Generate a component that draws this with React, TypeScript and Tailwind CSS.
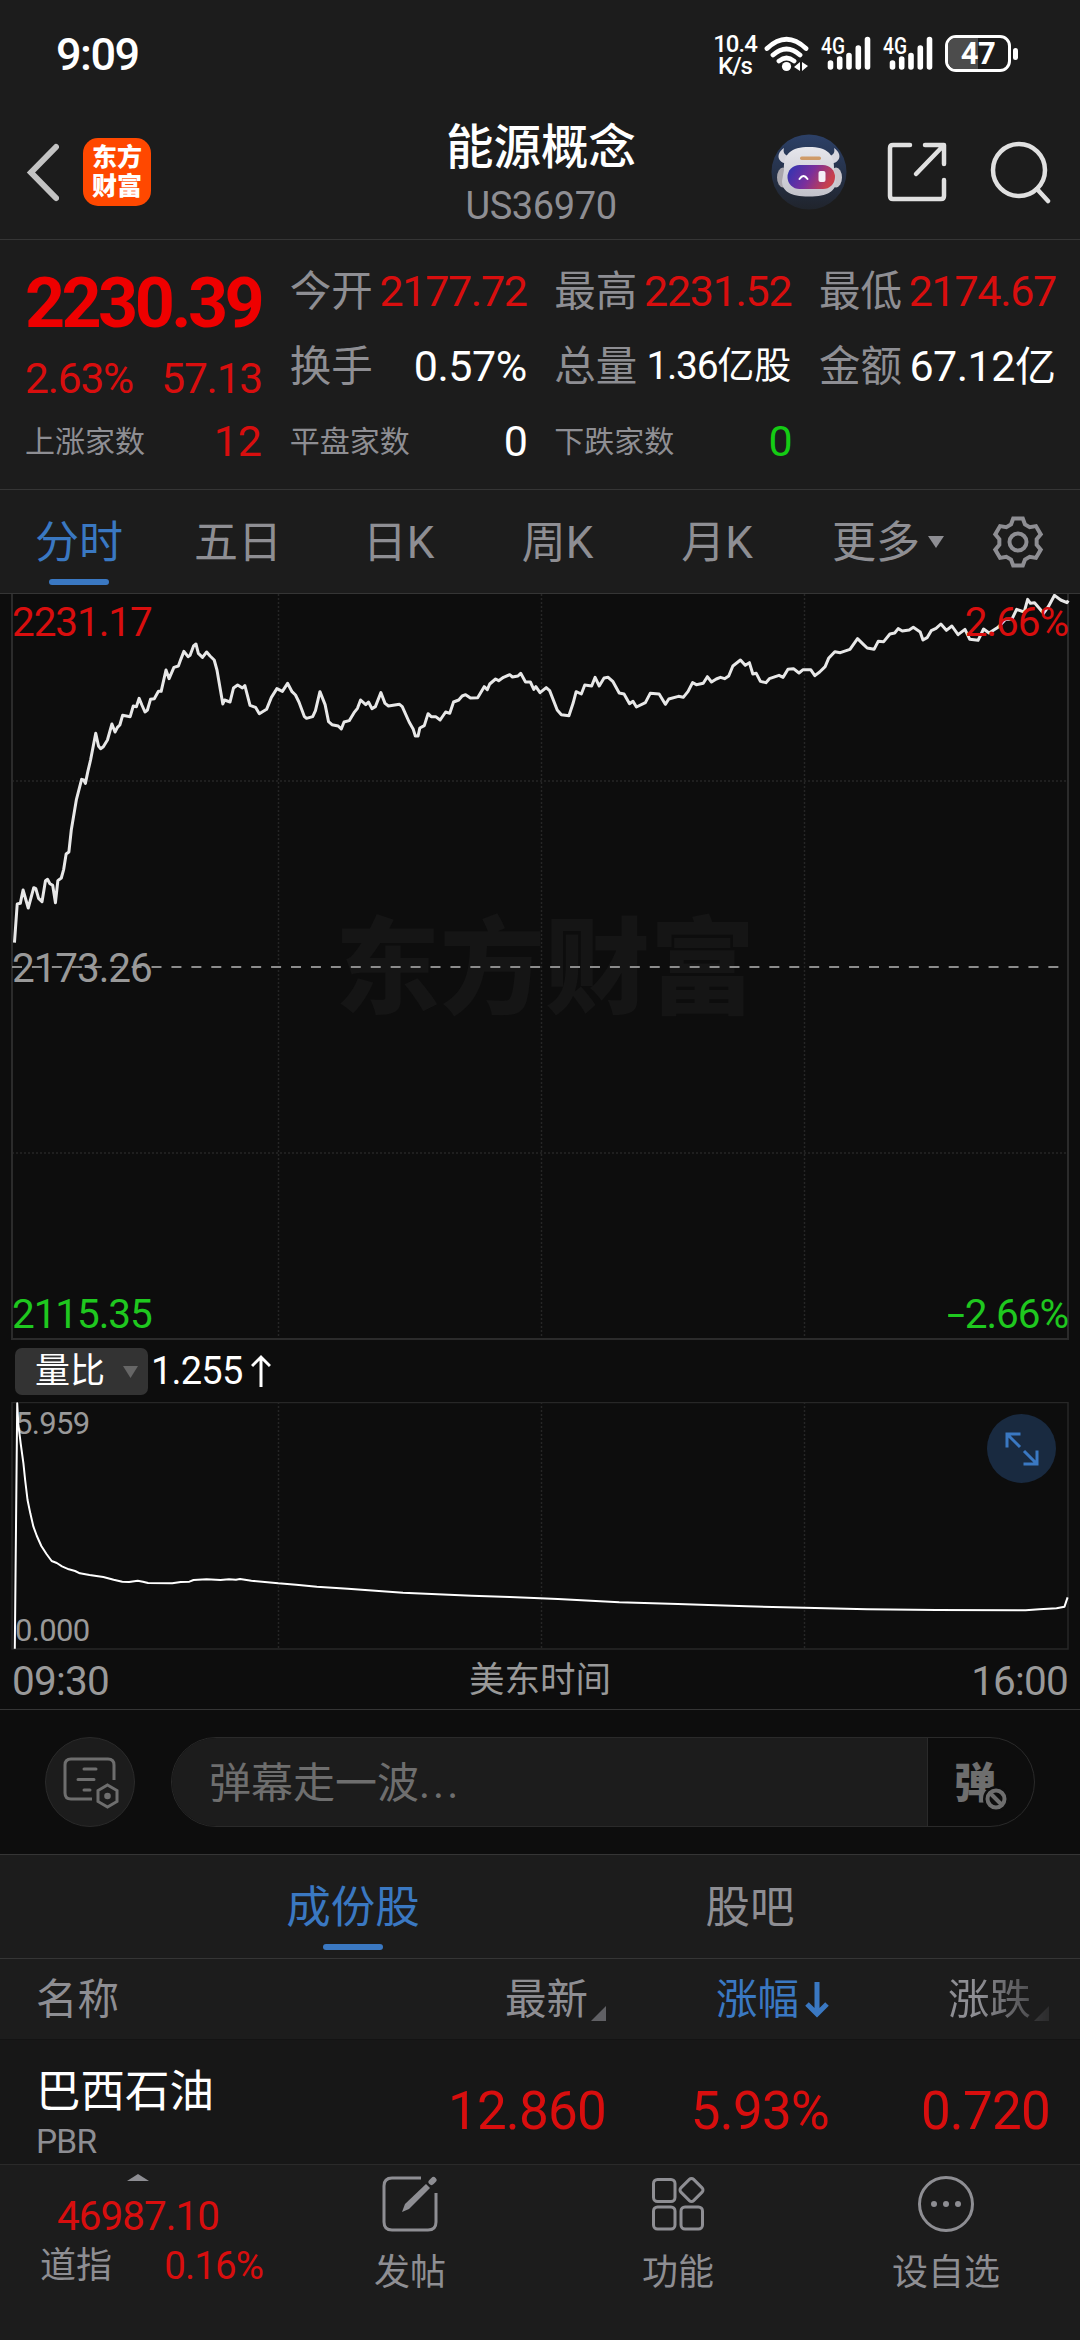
import React from 'react';
import clsx from 'clsx';

const GRID_X = [278.5, 541.5, 804.5];

// Minute line of the index, x/y pairs in plot units (3136 x 2232, origin shifted down by 12)
const pricePoints = [
  '42,1058 50,942 59,940 67,900 82,954 98,893 104,896 112,925 122,935 132,872 138,868 145,881 153,886 161,938 168,872 178,864 185,838 192,792 200,786 207,720 222,628 237,568 243,570 248,580 255,545 263,510 278,430 286,468 292,476 300,470 312,450 325,402 334,426 341,412 348,405 356,376 378,380 387,348 396,350 404,325 412,345 421,366 428,360 437,328 448,326 460,304 468,304 482,240 491,266 505,232 518,228 525,208 534,184 546,200 552,196 562,168 569,162 576,190 588,202 600,186 610,198 622,210 630,240 640,300 647,342 652,330 668,336 678,294 690,285 704,294 711,287 726,346 742,352 753,371 774,358 788,322 804,296 820,304 835,280 848,305 858,315 868,336 884,380 890,385 908,380 916,362 929,305 944,344 954,395 964,404 982,408 991,417 999,396 1014,392 1028,368 1038,355 1047,330 1062,344 1070,336 1080,356 1090,350 1106,308 1118,340 1128,348 1160,343 1168,350 1188,396 1200,418 1206,438 1214,438 1219,414 1232,407 1243,371 1252,380 1265,380 1278,390 1294,366 1306,370 1317,336 1332,330 1342,318 1352,314 1366,324 1387,323 1406,290 1415,299 1422,282 1439,267 1448,272 1462,262 1480,254 1488,261 1504,258 1512,250 1526,276 1540,276 1550,298 1556,290 1568,308',
  '1586,293 1596,302 1618,360 1630,374 1652,377 1664,340 1673,305 1688,312 1698,285 1718,288 1728,262 1740,288 1754,264 1766,262 1780,275 1798,309 1812,312 1828,341 1838,334 1848,351 1874,338 1888,310 1914,312 1932,343 1942,327 1970,319 1984,322 1998,304 2011,278 2022,284 2042,280 2054,260 2066,276 2080,267 2092,262 2104,266 2116,258 2128,228 2150,210 2164,226 2176,218 2186,252 2196,250 2208,274 2224,278 2234,266 2262,256 2274,262 2288,238 2304,236 2320,249 2332,239 2354,239 2366,257 2380,246 2396,230 2406,205 2424,185 2440,188 2468,178 2490,146 2504,160 2518,174 2538,178 2550,154 2566,155 2584,132 2598,129 2608,116 2620,123 2640,120 2652,112 2672,126 2680,150 2692,143 2704,122 2718,115 2732,102 2748,121 2764,108 2782,134 2802,118 2816,148 2840,151 2856,117 2872,129 2898,112 2920,88 2938,88 2952,58 2974,66 2984,28 2992,40 3004,38 3030,70 3044,50 3062,16 3080,30 3098,38 3102,32',
].join(' ');

const ratioPoints =
  '43,1106 50,370 53,430 60,490 68,550 73,600 80,660 88,700 97,740 107,768 120,798 135,822 150,843 165,849 180,859 200,868 218,873 232,880 260,885 300,891 330,899 355,905 375,906 400,902 415,905 430,909 500,910 525,906 550,905 562,900 600,898 640,900 665,898 685,899 697,897 730,902 808,910 860,914 920,920 1010,926 1170,938 1370,947 1480,951 1568,955 1620,957 1798,967 1968,972 2168,979 2336,983 2518,988 2718,990 2978,991 3018,988 3068,985 3091,980 3100,952';

const quotes = [
  [
    { label: '今开', value: '2177.72', color: 'text-[#d80e0e]' },
    { label: '换手', value: '0.57%', color: 'text-white', wide: true },
    { label: '平盘家数', value: '0', color: 'text-white', small: true },
  ],
  [
    { label: '最高', value: '2231.52', color: 'text-[#d80e0e]' },
    { label: '总量', value: '1.36', unit: '亿股', color: 'text-white', tight: true },
    { label: '下跌家数', value: '0', color: 'text-[#14cc14]', small: true },
  ],
  [
    { label: '最低', value: '2174.67', color: 'text-[#d80e0e]' },
    { label: '金额', value: '67.12', unit: '亿', color: 'text-white', wide: true },
  ],
];

const periods = [
  { label: '分时', width: 'w-[158px]', active: true },
  { label: '五日', width: 'w-[160px]' },
  { label: '日K', width: 'w-[161px]' },
  { label: '周K', width: 'w-[157px]' },
  { label: '月K', width: 'w-[162px]' },
];

function Signal() {
  return (
    <svg width="50" height="42" viewBox="0 -4 50 42" className="shrink-0">
      <text x="0" y="19" fill="#fff" fontSize="23" fontWeight="500" fontFamily="Roboto" textLength="24" lengthAdjust="spacingAndGlyphs">4G</text>
      <g stroke="#fff" strokeWidth="5.6" strokeLinecap="round">
        <path d="M9.5 28v4M18.700 24v8M28 20.500v11.500M37.300 13v19M46.500 4.500v27.500" />
      </g>
    </svg>
  );
}

function StatusBar() {
  return (
    <div className="flex h-[104px] items-center justify-between pl-[56px] pr-[62px] text-white">
      <span className="mt-1 text-[45px] font-medium leading-none tracking-[-1.5px]">9:09</span>
      <div className="flex items-center">
        <div className="mr-[8px] mt-[5px] flex w-[42px] flex-col items-center text-[24px] font-medium leading-[22px] tracking-[-1px]">
          <span>10.4</span>
          <span>K/s</span>
        </div>
        <svg width="46" height="38" viewBox="0 0 46 38" className="mr-[11px] mt-[3px]">
          <g fill="none" stroke="#fff" strokeWidth="4.800" strokeLinecap="round">
            <path d="M3 13.500Q22.500-5 42 13.500M9 20q13.500-12 27 0M15 26q7.500-6 15 0" />
          </g>
          <circle cx="22.500" cy="31.500" r="4.600" fill="#fff" />
          <path d="M36 27v9l-6-4zM38 36v-9l6 4z" fill="#fff" />
        </svg>
        <div className="mr-[12px] mt-[-1px]"><Signal /></div>
        <div className="mr-[12px] mt-[-1px]"><Signal /></div>
        <div className="relative mt-[3px] flex h-[37px] w-[66px] items-center justify-center overflow-hidden rounded-[11px] border-[3px] border-white">
          <div className="absolute left-0 top-0 h-full w-[30px] bg-[#4c4c4c]" />
          <span className="relative text-[31px] font-bold leading-none tracking-[-0.500px]">47</span>
        </div>
        <div className="ml-[2px] mt-[3px] h-[12px] w-[5px] rounded-full bg-white" />
      </div>
    </div>
  );
}

function Robot() {
  return (
    <svg width="76" height="76" viewBox="0 0 76 76">
      <defs>
        <linearGradient id="sky" x1="0" y1="0" x2="0" y2="1">
          <stop offset="0" stopColor="#2c4067" />
          <stop offset="1" stopColor="#20242c" />
        </linearGradient>
        <linearGradient id="visor" x1="0" y1="0" x2="1" y2="0.300">
          <stop offset="0" stopColor="#2a35b4" />
          <stop offset="0.550" stopColor="#7a2f9c" />
          <stop offset="1" stopColor="#c8404c" />
        </linearGradient>
        <linearGradient id="shell" x1="0" y1="0" x2="0" y2="1">
          <stop offset="0" stopColor="#e6e6ec" />
          <stop offset="1" stopColor="#c2c2ca" />
        </linearGradient>
      </defs>
      <circle cx="38" cy="38" r="37.500" fill="url(#sky)" />
      <path d="M18 30C8 30 3 21 13 14c-2 7 4 9 10 8zM58 30c10 0 15-9 5-16 2 7-4 9-10 8z" fill="#d6d6de" />
      <ellipse cx="12" cy="43.500" rx="6" ry="10" fill="#a9a6ad" />
      <ellipse cx="65" cy="43.500" rx="6" ry="10" fill="#c9c6cc" />
      <path d="M13 36C12 20 20 13 38 13s26 7 25 23l2 11c0 10-8 15.500-27 15.500S11 57 11 47z" fill="url(#shell)" />
      <rect x="29" y="22.500" width="21" height="3.500" rx="1.700" fill="#cf9a68" />
      <rect x="16.500" y="31" width="47.500" height="24" rx="12" fill="url(#visor)" />
      <path d="M28.500 45q4-6 8 0" fill="none" stroke="#fff" strokeWidth="2" strokeLinecap="round" />
      <rect x="47.500" y="37" width="7" height="11" rx="2" fill="#f4eef6" />
    </svg>
  );
}

function Header() {
  return (
    <header className="flex h-[136px] items-center border-b border-[#353535]">
      <svg width="34" height="60" viewBox="0 0 34 60" className="ml-[25px]">
        <path d="M31 5L6 30.500L31 56" fill="none" stroke="#c3c3c3" strokeWidth="6" strokeLinecap="round" />
      </svg>
      <div className="ml-[24px] flex h-[68px] w-[68px] flex-col items-center justify-center rounded-[15px] bg-[#ff4800] text-[25px] font-black leading-[29px] text-white">
        <span>东方</span>
        <span>财富</span>
      </div>
      <div className="flex flex-1 flex-col items-center pl-[160px] pt-[11px]">
        <span className="text-[47.500px] font-medium leading-[58px] text-white">能源概念</span>
        <span className="text-[38px] leading-[58px] tracking-[-0.400px] text-[#8e8e93]">US36970</span>
      </div>
      <div className="flex w-[309px] items-center">
        <Robot />
        <svg width="62" height="62" viewBox="0 0 62 62" className="ml-[39px]" fill="none" stroke="#e0e0e0" strokeWidth="4.500" strokeLinecap="round" strokeLinejoin="round">
          <path d="M24 4H7q-3 0-3 3v48q0 3 3 3h48q3 0 3-3V39M39 4h19v19M57 5L30 33" />
        </svg>
        <svg width="64" height="64" viewBox="0 0 64 64" className="ml-[41px]" fill="none" stroke="#e0e0e0" strokeWidth="4.500" strokeLinecap="round">
          <circle cx="30" cy="30" r="26" />
          <path d="M48 49l11 12" />
        </svg>
      </div>
    </header>
  );
}

function Quote() {
  return (
    <section className="grid h-[250px] grid-cols-[237px_237px_237px_237px] justify-between border-b border-[#353535] pl-[25px] pr-[24px] pt-[14px]">
      <div>
        <div className="flex h-[98px] items-center text-[70px] font-bold leading-none tracking-[-3.600px] text-[#ee0000]">2230.39</div>
        <div className="flex h-[54px] items-center justify-between text-[42.500px] leading-none tracking-[-1.200px] text-[#d80e0e]">
          <span>2.63%</span>
          <span>57.13</span>
        </div>
        <div className="flex h-[71px] items-center justify-between leading-none">
          <span className="text-[30px] text-[#8e8e93]">上涨家数</span>
          <span className="text-[43px] text-[#d80e0e]">12</span>
        </div>
      </div>
      {quotes.map((column, i) => (
        <div key={i}>
          {column.map((q) => (
            <div key={q.label} className="flex h-[75px] items-center justify-between whitespace-nowrap leading-none">
              <span className={clsx('text-[#8e8e93]', q.small ? 'text-[30px]' : 'text-[41.500px]')}>{q.label}</span>
              <span className={clsx(q.color, q.tight ? 'text-[39px]' : 'text-[43px]')}>
                <span className={q.wide ? 'tracking-[-0.500px]' : 'tracking-[-1.300px]'}>{q.value}</span>
                {q.unit && <span className={q.tight ? 'text-[37px]' : 'text-[41px]'}>{q.unit}</span>}
              </span>
            </div>
          ))}
        </div>
      ))}
    </section>
  );
}

function Gear() {
  const teeth = [0, 60, 120, 180, 240, 300].flatMap((deg) => {
    const a = (deg * Math.PI) / 180;
    return [[-7, -17.5], [-4.8, -23.5], [4.8, -23.5], [7, -17.5]].map(
      ([x, y]) => `${x * Math.cos(a) - y * Math.sin(a)},${x * Math.sin(a) + y * Math.cos(a)}`
    );
  });
  return (
    <svg width="54" height="54" viewBox="-27 -27 54 54" fill="none" stroke="#8e8e93" strokeWidth="4">
      <polygon points={teeth.join(' ')} />
      <circle r="8.500" />
    </svg>
  );
}

function PeriodTabs() {
  return (
    <nav className="flex h-[104px] items-center border-b border-[#353535] text-[44px] leading-none text-[#8e8e93]">
      {periods.map((p) => (
        <div key={p.label} className={clsx('relative flex h-full items-center justify-center pt-[3px]', p.width, p.active && 'text-[#3a78c2]')}>
          {p.label}
          {p.active && <div className="absolute bottom-[8px] left-[49px] h-[6px] w-[60px] rounded-full bg-[#3a78c2]" />}
        </div>
      ))}
      <div className="ml-[34px] flex items-center gap-[8px]">
        <span className="pt-[3px]">更多</span>
        <svg width="16" height="12" viewBox="0 0 16 12"><path d="M0 0h16L8 12z" fill="#8e8e93" /></svg>
      </div>
      <div className="ml-auto mr-[35px]"><Gear /></div>
    </nav>
  );
}

function PriceChart() {
  return (
    <section className="relative h-[746px]">
      <svg width="1080" height="746" className="absolute left-0 top-0">
        <g stroke="#262626" strokeWidth="1.500" strokeDasharray="2 2">
          {GRID_X.map((x) => <path key={x} d={`M${x} 0V744`} />)}
          <path d="M12 187H1068M12 559H1068" />
        </g>
        <path d="M12 0V745H1068V0" fill="none" stroke="#2b2b2b" strokeWidth="2" />
      </svg>
      <div className="absolute left-[335px] top-[323px] text-[105px] font-black leading-none text-[#151515]">东方财富</div>
      <svg width="1080" height="744" viewBox="0 12 3136 2232" preserveAspectRatio="none" className="absolute left-0 top-0">
        <polyline points={pricePoints} fill="none" stroke="#e8e8e8" strokeWidth="3" strokeLinejoin="round" vectorEffect="non-scaling-stroke" />
      </svg>
      <svg width="1080" height="4" className="absolute left-0 top-[371px]">
        <path d="M12 2H1068" stroke="#8c8c8c" strokeWidth="2" strokeDasharray="10 9.930" />
      </svg>
      <div className="relative flex h-full flex-col justify-between px-[12px] pb-[5px] pt-[7px] text-[40.500px] leading-[42px] tracking-[-1.100px]">
        <div className="flex justify-between text-[#d80e0e]"><span>2231.17</span><span>2.66%</span></div>
        <div className="text-[#999]">2173.26</div>
        <div className="flex justify-between text-[#1fc81f]">
          <span>2115.35</span>
          <span><span className="mr-[2px] inline-block origin-right scale-x-[1.600]">-</span>2.66%</span>
        </div>
      </div>
    </section>
  );
}

function RatioChart() {
  return (
    <section className="h-[370px] border-b border-[#353535]">
      <div className="flex h-[62px] items-center pl-[15px] text-white">
        <div className="flex h-[47px] w-[133px] items-center rounded-[7px] bg-[#333] pl-[20px] text-[35px] leading-none">
          量比
          <svg width="15" height="12" viewBox="0 0 15 12" className="ml-[18px] mt-[2px]"><path d="M0 0h15L7.500 12z" fill="#666" /></svg>
        </div>
        <span className="ml-[3px] text-[38px] leading-none tracking-[-0.800px]">1.255</span>
        <svg width="20" height="34" viewBox="0 0 20 34" className="ml-[9px]" fill="none" stroke="#fff" strokeWidth="3">
          <path d="M10 33V3M1 12l9-9 9 9" />
        </svg>
      </div>
      <div className="relative h-[248px]">
        <svg width="1080" height="248" className="absolute left-0 top-0">
          <g stroke="#262626" strokeWidth="1.500" strokeDasharray="2 2">
            {GRID_X.map((x) => <path key={x} d={`M${x} 0V247`} />)}
          </g>
          <path d="M12 0.500H1068V247H12z" fill="none" stroke="#272727" strokeWidth="1.500" />
        </svg>
        <div className="relative flex h-full flex-col justify-between pl-[15px] pb-[2px] pt-[5px] text-[31px] leading-[34px] tracking-[-0.700px] text-[#999]">
          <span>5.959</span>
          <span>0.000</span>
        </div>
        <svg width="1080" height="248" viewBox="0 366 3136 744" preserveAspectRatio="none" className="absolute left-0 top-0">
          <polyline points={ratioPoints} fill="none" stroke="#fff" strokeWidth="2" strokeLinejoin="round" vectorEffect="non-scaling-stroke" />
        </svg>
        <div className="absolute right-[24px] top-[12px] flex h-[69px] w-[69px] items-center justify-center rounded-full bg-[#192a40]">
          <svg width="34" height="34" viewBox="0 0 34 34" fill="none" stroke="#3a78c2" strokeWidth="3">
            <path d="M15.500 2H2v13.500M2 2l13 13M32 18.500V32H18.500M32 32L19 19" />
          </svg>
        </div>
      </div>
      <div className="flex h-[58px] items-center justify-between px-[12px] pt-[4px] text-[#999]">
        <span className="w-[180px] text-[40.500px] leading-none tracking-[-0.800px]">09:30</span>
        <span className="text-[35.500px] leading-none">美东时间</span>
        <span className="w-[180px] text-right text-[40.500px] leading-none tracking-[-0.800px]">16:00</span>
      </div>
    </section>
  );
}

function DanmuBar() {
  return (
    <section className="flex h-[145px] items-center border-b border-[#353535] pl-[45px]">
      <div className="flex h-[90px] w-[90px] items-center justify-center rounded-full border border-[#2a2a2a] bg-[#1c1c1c]">
        <svg width="56" height="52" viewBox="0 0 56 52" className="ml-[2px] mt-[2px]" fill="none" stroke="#6e6e6e" strokeWidth="3" strokeLinecap="round">
          <path d="M29 42H8q-6 0-6-6V8q0-6 6-6h37q6 0 6 6v15" strokeLinecap="butt" />
          <path d="M21 12h12M15 22.500h16M21 33h6" />
          <path d="M44.500 28l9.500 5.500v11L44.500 50 35 44.500v-11z" />
          <circle cx="44.500" cy="39" r="1.800" fill="#6e6e6e" />
        </svg>
      </div>
      <div className="ml-[36px] flex h-[90px] w-[864px] overflow-hidden rounded-full border border-[#2a2a2a]">
        <div className="flex flex-1 items-center bg-[#1c1c1c] pl-[37px] pt-[4px] text-[42px] leading-none text-[#6e6e6e]">
          <span>弹幕走一波<span className="tracking-[3px]">...</span></span>
        </div>
        <div className="relative w-[107px] border-l border-[#2a2a2a]">
          <span className="absolute left-[26px] top-[25px] text-[42px] font-black leading-none text-[#6e6e6e]">弹</span>
          <svg width="26" height="26" viewBox="0 0 26 26" className="absolute left-[55px] top-[48px]">
            <circle cx="13" cy="13" r="13" fill="#0d0d0d" />
            <circle cx="13" cy="13" r="8.500" fill="none" stroke="#6e6e6e" strokeWidth="4" />
            <path d="M7 7l12 12" stroke="#6e6e6e" strokeWidth="4" />
          </svg>
        </div>
      </div>
    </section>
  );
}

function Corner({ className }: { className?: string }) {
  return (
    <svg width="15" height="15" viewBox="0 0 15 15" className={className}>
      <path d="M15 0v15H0z" fill="#606064" />
    </svg>
  );
}

function Constituents() {
  return (
    <section className="h-[309px]">
      <div className="flex h-[104px] border-b border-[#353535] bg-[#1c1c1c] text-[44.500px] leading-none text-[#8e8e93]">
        <div className="relative ml-[153px] flex w-[400px] items-center justify-center pt-[4px] text-[#3a78c2]">
          成份股
          <div className="absolute bottom-[8px] h-[6px] w-[60px] rounded-full bg-[#3a78c2]" />
        </div>
        <div className="flex w-[394px] items-center justify-center pt-[4px]">股吧</div>
      </div>
      <div className="flex h-[81px] items-center border-b border-[#131313] bg-[#1c1c1c] pt-[2px] text-[41.500px] leading-none text-[#8e8e93]">
        <span className="ml-[36px]">名称</span>
        <div className="ml-auto flex w-[103px] items-end">最新<Corner className="ml-[3px]" /></div>
        <div className="ml-[108px] flex w-[115px] items-center text-[#3a78c2]">
          涨幅
          <svg width="24" height="36" viewBox="0 0 24 36" className="ml-[6px]" fill="none" stroke="#3a78c2" strokeWidth="5">
            <path d="M12 0v32M2 22l10 10 10-10" />
          </svg>
        </div>
        <div className="ml-[117px] mr-[28px] flex w-[104px] items-end [mask-image:linear-gradient(to_right,#000_30%,rgba(0,0,0,0.200)_100%)]">
          涨跌<Corner className="ml-[3px]" />
        </div>
      </div>
      <div className="flex h-[124px] items-center bg-[#171717] text-[53px] leading-none tracking-[-0.800px] text-[#d80e0e]">
        <div className="flex w-[300px] flex-col pl-[36px] tracking-normal">
          <span className="pt-[23px] text-[44.500px] leading-[56px] text-white">巴西石油</span>
          <span className="text-[33.500px] leading-[44px] tracking-[-0.800px] text-[#8e8e93]">PBR</span>
        </div>
        <span className="mt-[18px] w-[306px] text-right">12.860</span>
        <span className="mt-[18px] w-[223px] text-right">5.93%</span>
        <span className="mt-[18px] w-[221px] text-right">0.720</span>
      </div>
    </section>
  );
}

const actions = [
  {
    label: '发帖',
    icon: (
      <svg width="56" height="56" viewBox="0 0 56 56" fill="none" stroke="#8e8e93" strokeWidth="3">
        <path d="M39 2H10q-8 0-8 8v36q0 8 8 8h36q8 0 8-8V17" />
        <path d="M20 36l3-8 21-20 4 4-21 21z" fill="#8e8e93" stroke="none" />
        <path d="M49.500 6l2-2" strokeWidth="6" strokeLinecap="round" />
      </svg>
    ),
  },
  {
    label: '功能',
    icon: (
      <svg width="56" height="56" viewBox="0 0 56 56" fill="none" stroke="#8e8e93" strokeWidth="3">
        <rect x="3.500" y="3.500" width="21.500" height="22" rx="4" />
        <rect x="3.500" y="31" width="21.500" height="22" rx="4" />
        <rect x="31" y="31" width="21.500" height="22" rx="4" />
        <rect x="32.500" y="5" width="18" height="18" rx="3" transform="rotate(45 41.500 14)" />
      </svg>
    ),
  },
  {
    label: '设自选',
    icon: (
      <svg width="56" height="56" viewBox="0 0 56 56">
        <circle cx="28" cy="28" r="26.500" fill="none" stroke="#8e8e93" strokeWidth="3" />
        <g fill="#8e8e93">
          <circle cx="16" cy="28" r="3" />
          <circle cx="28" cy="28" r="3" />
          <circle cx="40" cy="28" r="3" />
        </g>
      </svg>
    ),
  },
];

function BottomBar() {
  return (
    <footer className="flex h-[176px] border-t border-[#2a2a2a] bg-[#1c1c1c] leading-none text-[#8e8e93]">
      <div className="flex w-[276px] flex-col items-center pt-[9px]">
        <svg width="22" height="7" viewBox="0 0 22 7"><path d="M11 0l11 7H0z" fill="#8e8e93" /></svg>
        <span className="mt-[15px] text-[40.500px] tracking-[-1px] text-[#d80e0e]">46987.10</span>
        <div className="mt-[10px] flex w-full items-center justify-between pl-[40px] pr-[13px] text-[36px]">
          道指
          <span className="text-[38.500px] tracking-[-0.900px] text-[#d80e0e]">0.16%</span>
        </div>
      </div>
      {actions.map((action) => (
        <div key={action.label} className="flex w-[268px] flex-col items-center pt-[11px] text-[36px]">
          {action.icon}
          <span className="mt-[23px]">{action.label}</span>
        </div>
      ))}
    </footer>
  );
}

export default function App() {
  return (
    <div className="h-[2340px] w-[1080px] overflow-hidden bg-[#0d0d0d] font-['Roboto','Noto_Sans_CJK_SC',sans-serif]">
      <div className="bg-[#1c1c1c]">
        <StatusBar />
        <Header />
        <Quote />
        <PeriodTabs />
      </div>
      <PriceChart />
      <RatioChart />
      <DanmuBar />
      <Constituents />
      <BottomBar />
    </div>
  );
}
